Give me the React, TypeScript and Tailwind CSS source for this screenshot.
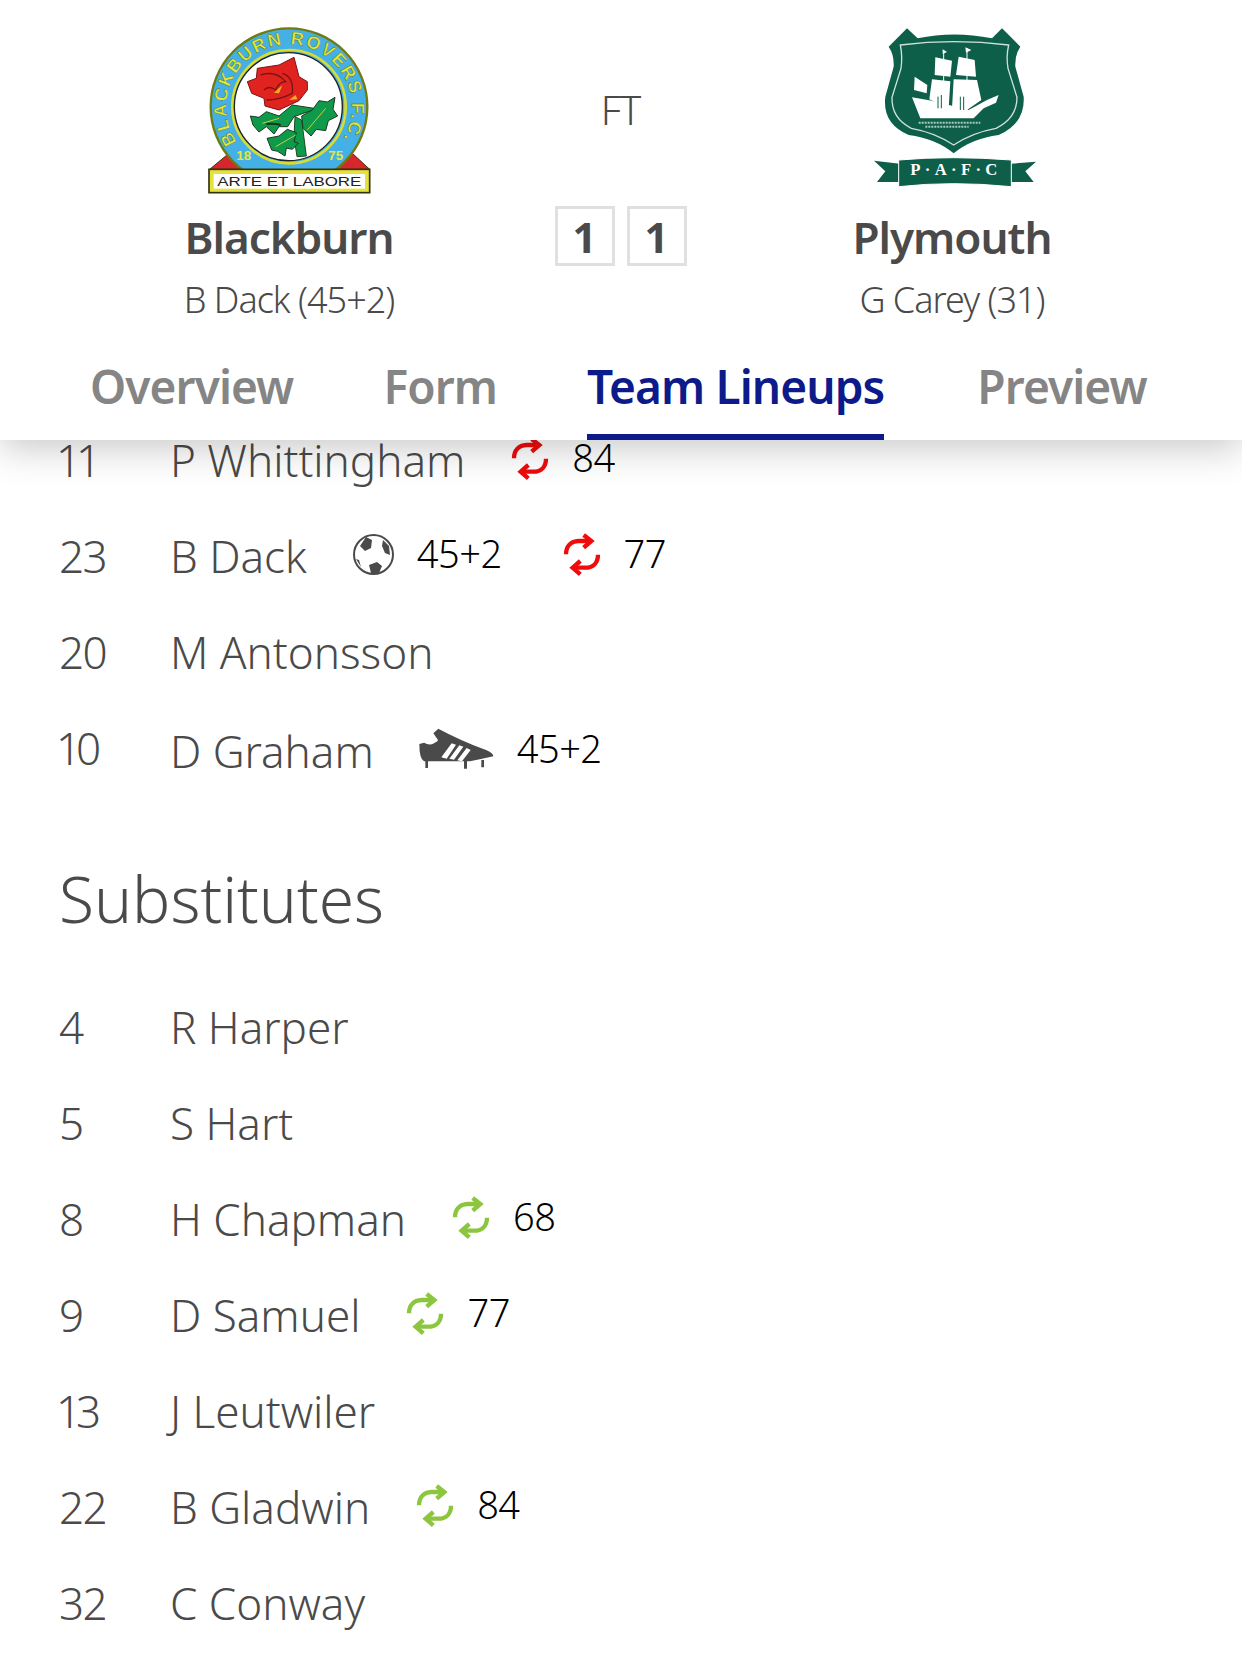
import React from "react";

const font = { fontFamily: '"Noto Sans", sans-serif' };

function Swap({ color }: { color: string }) {
  return (
    <svg width="40" height="45" viewBox="0 0 120 135" fill="none" stroke={color} strokeWidth="13" className="shrink-0">
      <path d="M12 67C12 45 25 28 50 27L85 27" />
      <path d="M65 9L88 27L65 47" />
      <path d="M108 68C108 90 95 107 70 107L35 107" />
      <path d="M55 87L32 107L55 127" />
    </svg>
  );
}

function Ball() {
  return (
    <svg width="43" height="43" viewBox="0 0 43 43" className="shrink-0">
      <circle cx="21.5" cy="21.5" r="19.5" fill="#fff" stroke="#4a4a4a" strokeWidth="2" />
      <path d="M14 4L20 7L19 15L13 18L8 13Z" fill="#4a4a4a" />
      <path d="M31 7L37 13L38 22L33 20L30 13Z" fill="#4a4a4a" />
      <path d="M17 32L25 29L30 33L27 40L19 40Z" fill="#4a4a4a" />
      <path d="M4 26L7 27L9 34Z" fill="#4a4a4a" />
    </svg>
  );
}

function Boot() {
  return (
    <svg width="76" height="42" viewBox="48 58 226 126" className="shrink-0">
      <path d="M48 106L62 102Q85 116 104 94L90 74L105 60Q170 95 250 125Q270 134 270 143Q240 150 200 158L62 158Q48 150 48 106Z" fill="#4a4a4a" />
      <path d="M66 178h8v-22h-8zM182 180h9v-24h-9zM234 176h8v-22h-8z" fill="#4a4a4a" />
      <path d="M114 146L145 104L158 108L130 150ZM138 150L168 110L180 114L152 153ZM162 155L190 118L202 124L176 158Z" fill="#fff" />
      <path d="M63 82Q75 98 102 96" fill="none" stroke="#fff" strokeWidth="5" />
    </svg>
  );
}

function Blackburn() {
  const sans = { fontFamily: '"Liberation Sans", sans-serif' };
  return (
    <svg width="220" height="200" viewBox="0 0 660 600" className="block">
      <path d="M92 478L150 430L520 430L572 478Z" fill="#d8262c" stroke="#3a3a10" strokeWidth="3" />
      <circle cx="330" cy="290" r="235" fill="#45b0e5" stroke="#6f7a10" strokeWidth="7" />
      <circle cx="330" cy="290" r="170" fill="none" stroke="#d9dc30" strokeWidth="8" />
      <circle cx="328" cy="290" r="162" fill="#fff" stroke="#222" strokeWidth="4" />
      <defs>
        <path id="ringA" d="M174 396A188 188 0 1 1 486 396" />
      </defs>
      <text fill="#e4e83c" stroke="#3f6a20" strokeWidth="1.2" fontSize="54" fontWeight="700" style={sans} textLength="800">
        <textPath href="#ringA" textLength="800">BLACKBURN ROVERS F.C.</textPath>
      </text>
      <text x="172" y="450" fill="#e4e83c" fontSize="40" fontWeight="700" style={sans}>18</text>
      <text x="448" y="450" fill="#e4e83c" fontSize="40" fontWeight="700" style={sans}>75</text>
      <path d="M348 320L368 330L382 438L354 440L345 380Z" fill="#0e9a4a" stroke="#1c4a20" strokeWidth="3" />
      <path d="M214 318L240 322L262 305L300 318L340 285L412 296L345 320L326 350L300 350L285 372L262 350L240 366L222 345Z" fill="#0e9a4a" stroke="#1c3a20" strokeWidth="3" />
      <path d="M368 318L400 300L420 272L445 276L468 262L462 298L476 318L448 332L440 362L412 358L396 378L372 355Z" fill="#0e9a4a" stroke="#1c3a20" strokeWidth="3" />
      <path d="M264 385L300 378L325 358L352 368L345 395L358 400L340 418L322 414L318 438L296 424L278 420Z" fill="#0e9a4a" stroke="#1c3a20" strokeWidth="3" />
      <path d="M385 360L440 295M290 410L350 375M250 340L300 325" stroke="#c9cf3a" strokeWidth="3" fill="none" />
      <path d="M262 342Q290 340 305 345" stroke="#16321c" strokeWidth="6" fill="none" />
      <path d="M235 175L300 165L345 142L360 200L385 215L385 240L360 272L300 300L258 288L255 265L218 250L205 215L232 205Z" fill="#e1231f" stroke="#7a1412" strokeWidth="3" />
      <path d="M245 195Q290 180 320 215Q300 215 290 240Q270 225 255 240M310 190Q345 200 340 250M262 270Q300 270 340 250" fill="none" stroke="#7a1412" strokeWidth="4" />
      <path d="M285 248L310 225L300 250ZM330 270L350 255L355 268Z" fill="#f2b01e" />
      <rect x="90" y="478" width="482" height="70" fill="#e4e23c" stroke="#33330c" strokeWidth="5" />
      <rect x="104" y="492" width="454" height="44" fill="#fff" />
      <text x="331" y="528" textAnchor="middle" fill="#222" fontSize="38" style={sans} textLength="432" lengthAdjust="spacingAndGlyphs">ARTE ET LABORE</text>
    </svg>
  );
}

function Plymouth() {
  const g = "#0e5f4a";
  return (
    <svg width="200" height="200" viewBox="0 0 600 600" className="block">
      <path d="M165 55L197 85Q305 62 420 85L450 55L505 110Q488 135 490 170L515 260Q520 340 440 375Q360 385 305 430Q250 385 170 375Q90 340 100 260L125 170Q127 135 110 110Z" fill={g} />
      <path d="M145 105Q305 85 470 105Q462 140 468 175L495 262Q495 325 432 355Q360 368 305 405Q250 368 178 355Q118 325 120 262L147 175Q152 140 145 105Z" fill="none" stroke="#cfe2da" strokeWidth="4" />
      <path d="M180 262L240 272L350 300L405 270L440 255L432 278L395 295L365 325L205 325Z" fill="#fff" />
      <path d="M250 142L300 152L295 200L248 195Z M240 208L295 214L290 295L232 268Z M320 140L368 150L372 200L312 195Z M305 208L375 210L388 270L345 300L300 295Z M188 200L226 225L224 250L186 240Z" fill="#fff" />
      <path d="M275 120V285M345 115V300" stroke="#fff" strokeWidth="3" />
      <path d="M258 260V295M268 255V295M325 260V300M335 260V300" stroke={g} strokeWidth="3" />
      <path d="M272 118L285 126L272 132ZM340 112L358 120L342 128Z" fill="#fff" />
      <path d="M200 338H385M220 350H350" stroke="#a9c9bc" strokeWidth="6" strokeDasharray="6 3" />
      <path d="M66 452L150 462L150 516L75 516L100 484Z" fill={g} />
      <path d="M552 455L468 462L468 516L545 516L520 484Z" fill={g} />
      <path d="M140 450Q300 436 478 450L478 530Q300 512 140 530Z" fill={g} stroke="#fff" strokeWidth="3" />
      <text x="312" y="496" textAnchor="middle" fill="#fff" fontSize="50" fontWeight="700" letterSpacing="13" style={{ fontFamily: '"Liberation Serif", serif' }}>P·A·F·C</text>
    </svg>
  );
}

type Ev = { k: "swapR" | "swapG" | "ball" | "boot"; t: string };

function Row({ n, name, ev = [], low }: { n: string; name: string; ev?: Ev[]; low?: boolean }) {
  const narrow = n[0] === "1";
  return (
    <div className="flex h-[96px] items-center pl-[59px]">
      <span className="w-[111px] shrink-0 text-[44px] font-light text-[#4a4a4a]">
        <span className={narrow ? "-ml-[3px] tracking-[-5px]" : "tracking-[-1.5px]"}>{n}</span>
      </span>
      <span className={`text-[44px] font-light text-[#4a4a4a] ${low ? "mt-[6px]" : ""}`}>{name}</span>
      <div className={`ml-[45px] flex items-center gap-[60px] ${low ? "mt-[2px]" : "mb-[4px]"}`}>
        {ev.map((e, i) => (
          <div key={i} className="flex items-center gap-[22px]">
            {e.k === "swapR" && <Swap color="#ee0c0c" />}
            {e.k === "swapG" && <Swap color="#8cc63f" />}
            {e.k === "ball" && <Ball />}
            {e.k === "boot" && <Boot />}
            <span className="mb-[2px] text-[38px] font-light tracking-[-0.5px] text-black">{e.t}</span>
          </div>
        ))}
      </div>
    </div>
  );
}

function Team({ logo, name, scorer }: { logo: React.ReactNode; name: string; scorer: string }) {
  return (
    <div className="flex w-[330px] flex-col items-center">
      <div className="flex h-[200px] items-center">{logo}</div>
      <div className="-mt-[1px] text-[44px] leading-[56px] font-semibold tracking-[-1px] text-[#4a4a4a]">{name}</div>
      <div className="mt-[12px] text-[36px] leading-[46px] font-light tracking-[-1px] text-[#4a4a4a]">{scorer}</div>
    </div>
  );
}

function Score({ v }: { v: string }) {
  return (
    <div className="flex h-[60px] w-[60px] items-center justify-center border-[3px] border-[#e0e0e0] text-[42px] font-bold text-[#4a4a4a]">{v}</div>
  );
}

export default function App() {
  return (
    <div className="h-[1670px] w-[1242px] overflow-hidden bg-white" style={font}>
      <header className="relative z-10 h-[440px] bg-white shadow-[0_8px_36px_rgba(0,0,0,0.22)]">
        <div className="flex justify-between pt-[10px] pl-[124px] pr-[125px]">
          <Team logo={<Blackburn />} name="Blackburn" scorer="B Dack (45+2)" />
          <div className="flex flex-col items-center">
            <div className="mt-[75px] text-[40px] leading-[50px] font-light tracking-[-1px] text-[#4a4a4a]">FT</div>
            <div className="mt-[71px] flex gap-[12px]">
              <Score v="1" />
              <Score v="1" />
            </div>
          </div>
          <Team logo={<Plymouth />} name="Plymouth" scorer="G Carey (31)" />
        </div>
        <nav className="mt-[33px] flex gap-[90px] pl-[90px] text-[46px] leading-[60px] font-semibold tracking-[-0.9px]">
          <span className="h-[84px] text-[#858585]">Overview</span>
          <span className="h-[84px] text-[#858585]">Form</span>
          <span className="h-[84px] border-b-[6px] border-[#0d1a8a] text-[#0d1a8a]">Team Lineups</span>
          <span className="ml-[3px] h-[84px] text-[#858585]">Preview</span>
        </nav>
      </header>
      <main className="relative -mt-[28px]">
        <Row n="11" name="P Whittingham" ev={[{ k: "swapR", t: "84" }]} />
        <Row n="23" name="B Dack" ev={[{ k: "ball", t: "45+2" }, { k: "swapR", t: "77" }]} />
        <Row n="20" name="M Antonsson" />
        <Row n="10" name="D Graham" low ev={[{ k: "boot", t: "45+2" }]} />
        <h2 className="mt-[63px] pl-[59px] text-[64px] leading-[80px] font-light text-[#4a4a4a]">Substitutes</h2>
        <div className="mt-[40px]">
          <Row n="4" name="R Harper" />
          <Row n="5" name="S Hart" />
          <Row n="8" name="H Chapman" ev={[{ k: "swapG", t: "68" }]} />
          <Row n="9" name="D Samuel" ev={[{ k: "swapG", t: "77" }]} />
          <Row n="13" name="J Leutwiler" />
          <Row n="22" name="B Gladwin" ev={[{ k: "swapG", t: "84" }]} />
          <Row n="32" name="C Conway" />
        </div>
      </main>
    </div>
  );
}
